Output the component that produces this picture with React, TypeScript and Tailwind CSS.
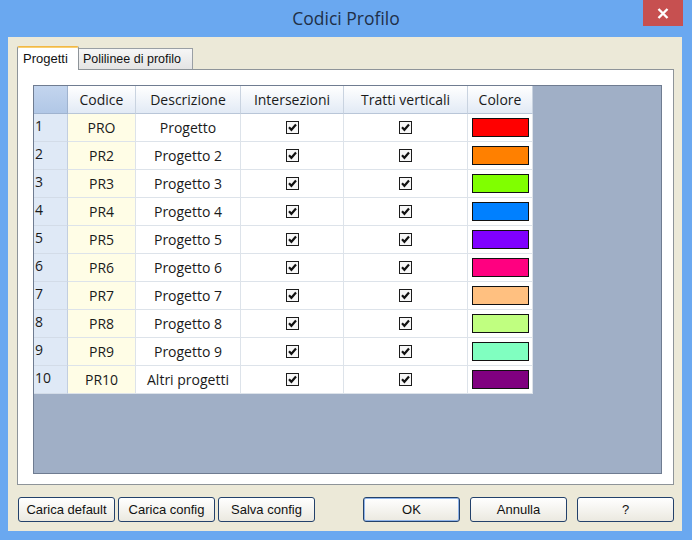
const rows = [
  { n: 1, code: "PRO", desc: "Progetto", swatch: "bg-[#ff0000]" },
  { n: 2, code: "PR2", desc: "Progetto 2", swatch: "bg-[#ff8000]" },
  { n: 3, code: "PR3", desc: "Progetto 3", swatch: "bg-[#80ff00]" },
  { n: 4, code: "PR4", desc: "Progetto 4", swatch: "bg-[#0080ff]" },
  { n: 5, code: "PR5", desc: "Progetto 5", swatch: "bg-[#8000ff]" },
  { n: 6, code: "PR6", desc: "Progetto 6", swatch: "bg-[#ff0080]" },
  { n: 7, code: "PR7", desc: "Progetto 7", swatch: "bg-[#ffc080]" },
  { n: 8, code: "PR8", desc: "Progetto 8", swatch: "bg-[#c0ff80]" },
  { n: 9, code: "PR9", desc: "Progetto 9", swatch: "bg-[#80ffc0]" },
  { n: 10, code: "PR10", desc: "Altri progetti", swatch: "bg-[#800080]" },
];

const headers = ["Codice", "Descrizione", "Intersezioni", "Tratti verticali", "Colore"];

function Check() {
  return (
    <svg width="13" height="13" viewBox="0 0 13 13">
      <rect x="0.5" y="0.5" width="12" height="12" fill="#f7f7f7" stroke="#1c1c1c" />
      <path d="M3 6.3 L5.4 8.8 L10 3.6" fill="none" stroke="#111" strokeWidth="2.2" />
    </svg>
  );
}

function DlgButton({ label, primary }: { label: string; primary?: boolean }) {
  return (
    <button
      className={`h-[25px] w-[97px] rounded-[3px] border border-[#23416b] bg-gradient-to-b from-white to-[#ebe9e0] text-[13px] text-[#111] ${
        primary ? "shadow-[inset_0_0_0_1px_#8fb3e8]" : ""
      }`}
    >
      {label}
    </button>
  );
}

export default function App() {
  return (
    <div
      className="flex h-[540px] w-[692px] flex-col bg-[#6aa8f0]"
      style={{ fontFamily: '"Liberation Sans", Arial, sans-serif' }}
    >
      {/* title bar */}
      <div className="grid h-[37px] grid-cols-[1fr_auto_1fr]">
        <div />
        <div
          className="pt-[5px] text-[17.5px] text-[#1f3048]"
          style={{ fontFamily: '"Open Sans", sans-serif' }}
        >
          Codici Profilo
        </div>
        <div className="flex justify-end pr-[9px]">
          <div className="flex h-[26px] w-[40px] items-center justify-center bg-[#c75050]">
            <svg width="12" height="11" viewBox="0 0 12 11">
              <path d="M1.5 1 L10.5 10 M10.5 1 L1.5 10" stroke="white" strokeWidth="2.4" />
            </svg>
          </div>
        </div>
      </div>

      {/* client */}
      <div className="mb-[9px] ml-[8px] mr-[10px] flex flex-1 flex-col bg-[#ece9d8] pb-[9px] pt-[9px]">
        {/* tabs */}
        <div className="ml-[9px] flex h-[23px] items-end text-[13px] text-[#111]">
          <div className="relative z-10 -mb-px flex h-[24px] w-[62px] items-start rounded-t-[2px] border border-b-0 border-[#8e9499] border-t-[#f2b846] bg-white pl-[5px] pt-[2px] shadow-[inset_0_1px_0_#f8cf72]">
            Progetti
          </div>
          <div className="flex h-[21px] w-[114px] items-center border border-b-0 border-l-0 border-[#9a9fa4] bg-gradient-to-b from-[#f6f6f6] to-[#e4e4e4] pl-[4px] text-[12.5px]">
            Polilinee di profilo
          </div>
        </div>

        {/* page */}
        <div className="ml-[9px] mr-[8px] flex flex-1 flex-col border border-[#8e9499] bg-white pb-[10px] pl-[15px] pr-[11px] pt-[15px]">
          <div
            className="flex-1 border border-[#6f7c91] bg-[#a0afc6]"
            style={{ fontFamily: '"Open Sans", sans-serif' }}
          >
            <div className="grid w-fit grid-cols-[34px_68px_105px_103px_124px_65px] text-[14px] text-[#1a1a1a]">
              <div className="h-[28px] border-b border-r border-[#9fb3cf] bg-gradient-to-b from-[#c3d5ee] to-[#b1c7e6]" />
              {headers.map((h) => (
                <div
                  key={h}
                  className="flex h-[28px] items-center justify-center border-b border-r border-b-[#b9c6d8] border-r-[#c9d3e0] bg-gradient-to-b from-white to-[#e2eaf5]"
                >
                  {h}
                </div>
              ))}
              {rows.map((r) => (
                <div key={r.n} className="contents">
                  <div className="h-[28px] border-b border-r border-b-[#d3dce8] border-r-[#c2cee0] bg-[#dfe9f6] pl-[1px] pt-[2px] leading-[20px]">
                    {r.n}
                  </div>
                  <div className="flex h-[28px] items-center justify-center border-b border-r border-[#dde3ea] bg-[#fffde6]">
                    {r.code}
                  </div>
                  <div className="flex h-[28px] items-center justify-center border-b border-r border-[#dde3ea] bg-white">
                    {r.desc}
                  </div>
                  <div className="flex h-[28px] items-center justify-center border-b border-r border-[#dde3ea] bg-white">
                    <Check />
                  </div>
                  <div className="flex h-[28px] items-center justify-center border-b border-r border-[#dde3ea] bg-white">
                    <Check />
                  </div>
                  <div className="flex h-[28px] items-center justify-center border-b border-r border-[#dde3ea] bg-white">
                    <div className={`h-[19px] w-[57px] border border-[#111] ${r.swatch}`} />
                  </div>
                </div>
              ))}
            </div>
          </div>
        </div>

        {/* buttons */}
        <div className="mt-[12px] flex pl-[10px] pr-[8px]">
          <div className="flex gap-[3px]">
            <DlgButton label="Carica default" />
            <DlgButton label="Carica config" />
            <DlgButton label="Salva config" />
          </div>
          <div className="ml-auto flex gap-[10px]">
            <DlgButton label="OK" primary />
            <DlgButton label="Annulla" />
            <DlgButton label="?" />
          </div>
        </div>
      </div>
    </div>
  );
}
